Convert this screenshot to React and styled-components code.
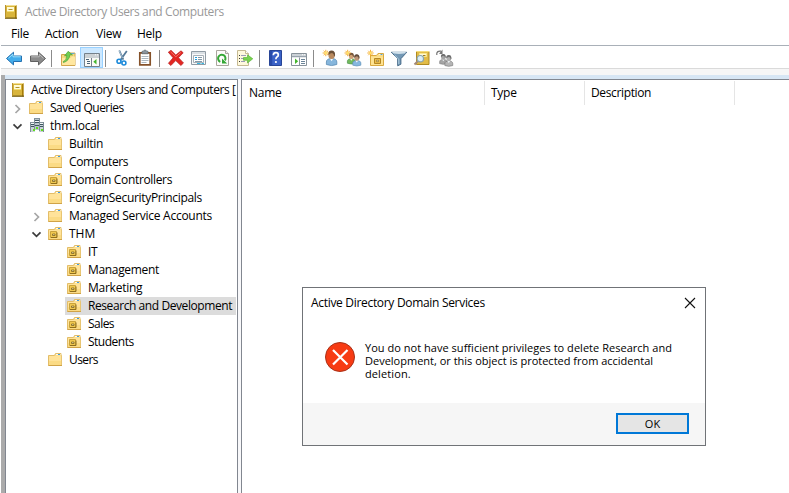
import React from "react";
import styled, { createGlobalStyle, css } from "styled-components";

const Global = createGlobalStyle`
  * { box-sizing: border-box; }
  html, body { margin: 0; padding: 0; background: #fff; overflow: hidden; }
`;

const Window = styled.div`
  position: relative;
  width: 789px;
  height: 493px;
  display: flex;
  flex-direction: column;
  overflow: hidden;
  background: #fff;
  color: #000;
  font-family: "Open Sans", "Noto Sans", sans-serif;
  font-size: 12px;
  line-height: 18px;
  white-space: nowrap;
  cursor: default;
`;

const Text = styled.span`
  flex: none;
  letter-spacing: ${(p) => p.$track ?? -0.25}px;
`;

const TitleBar = styled.header`
  height: 24px;
  flex: none;
  display: flex;
  align-items: center;
  gap: 7px;
  padding: 0 0 1px 4px;
  color: #999;
`;

const MenuBar = styled.nav`
  height: 21px;
  flex: none;
  display: flex;
  padding: 1px 0 0 11px;
`;

const MenuItem = styled.div`
  width: ${(p) => p.$width}px;
`;

const Toolbar = styled.div`
  height: 24px;
  flex: none;
  display: flex;
  margin-left: 1px;
  padding: 1px 0 0 2px;
  border-top: 1px solid #a9b0b8;
  border-bottom: 1px solid #dadada;
`;

const ToolButton = styled.div`
  width: 23px;
  height: 21px;
  flex: none;
  ${(p) =>
    p.$active &&
    css`
      background: #cce8ff;
      box-shadow: inset 0 0 0 1px #99d1ff;
    `}
  svg { display: block; }
`;

const Separator = styled.div`
  width: 1px;
  height: 17px;
  flex: none;
  margin: 3px 5px 0 2px;
  background: #8b8b8b;
`;

const Band = styled.div`
  height: 6px;
  flex: none;
  margin-left: 1px;
  background: #f6f6f6;
`;

const Workspace = styled.main`
  flex: 1;
  min-height: 0;
  display: flex;
  margin-left: 1px;
  border-left: 4px solid #ababab;
  padding-top: 4px;
  background: linear-gradient(#d7e6f4 0 4px, #f8f8fa 4px);
`;

const TreePane = styled.aside`
  width: 233px;
  flex: none;
  padding-top: 1px;
  overflow: hidden;
  background: #fff;
  border: 1px solid #828790;
  border-bottom: 0;
`;

const ListPane = styled.section`
  flex: 1;
  margin-left: 3px;
  background: #fff;
  border: 1px solid #828790;
  border-width: 1px 0 0 1px;
`;

const Row = styled.div`
  height: 18px;
  display: flex;
  align-items: center;
  padding-left: ${(p) => p.$indent}px;
  padding-right: 1px;
  overflow: hidden;
`;

const Expander = styled.div`
  width: 15px;
  flex: none;
  height: 18px;
  svg { display: block; }
`;

const RowBody = styled.div`
  display: flex;
  align-items: center;
  height: 18px;
  gap: ${(p) => p.$gap ?? 6}px;
  padding-left: 2px;
  flex: 1;
  min-width: 0;
  background: ${(p) => (p.$selected ? "#dcdcdc" : "transparent")};
  svg { flex: none; }
`;

const HeaderRow = styled.div`
  display: flex;
  padding-top: 1px;
  height: 26px;
`;

const HeaderCell = styled.div`
  width: ${(p) => p.$width}px;
  height: 24px;
  padding: 3px 0 0 ${(p) => p.$pad ?? 6}px;
  border-right: 1px solid #e5e5e5;
`;

const Dialog = styled.div`
  position: absolute;
  left: 302px;
  top: 287px;
  width: 404px;
  height: 159px;
  display: flex;
  flex-direction: column;
  background: #fff;
  border: 1px solid #707377;
`;

const DialogTitle = styled.div`
  height: 30px;
  flex: none;
  display: flex;
  justify-content: space-between;
  align-items: center;
  padding: 0 9px 0 8px;
`;

const DialogBody = styled.div`
  flex: 1;
  display: flex;
  gap: 9px;
  padding: 23px 0 0 22px;
`;

const Message = styled.p`
  margin: 0;
  font-size: 11px;
  line-height: 13px;
`;

const Line = styled.span`
  display: block;
  letter-spacing: ${(p) => p.$track}px;
`;

const DialogFooter = styled.div`
  height: 42px;
  flex: none;
  display: flex;
  justify-content: flex-end;
  padding: 10px 16px 0 0;
  background: #f6f6f6;
`;

const OkButton = styled.button`
  width: 73px;
  height: 21px;
  padding: 0;
  font: inherit;
  font-size: 11px;
  line-height: 17px;
  color: #000;
  background: #e5e5e5;
  border: 2px solid #0078d7;
`;

const BookIcon = () => (
  <svg width="14" height="16" viewBox="0 0 14 16">
    <path d="M1 1h11.5v13.5H1z" fill="#d9b53c" />
    <path d="M11 1h1.5v13.5H11z" fill="#a67c08" />
    <path d="M1 1h11.5v1H1z" fill="#f2de92" />
    <path d="M1 13.5h12v1.3H1z" fill="#77611d" />
    <path d="M1.5 1v13" stroke="#b8922c" />
    <path d="M3 3h7v5H3z" fill="#fffbd6" />
    <path d="M3 7.5h7" stroke="#f2dc72" />
    <path d="M4.5 5.5h4" stroke="#b1932e" />
  </svg>
);

const FolderIcon = ({ unit }) => (
  <svg width="15" height="16" viewBox="0 0 15 16">
    <path d="M.5 3.5h6l1-2h5.5v2h.5v10H.5z" fill="#fbdc86" stroke="#e3bd68" />
    <path d="M1 4h6.2l1-.5h5V13H1z" fill="#ffe39a" />
    <path d="M1 9h12v4H1z" fill="#f9d578" opacity=".6" />
    <path d="M8 2.5h4.5" stroke="#fffbe9" />
    <path d="M10 2.5h2" stroke="#3f9be0" />
    <path d="M.5 13.5H14" stroke="#d0a347" />
    {unit && (
      <>
        <path d="M2.5 5.5h6v6h-6z" fill="#f0c850" stroke="#c9a33c" />
        <path d="M3 11.5h6v-5" fill="none" stroke="#8f6e1c" />
        <path d="M4.5 8h2.5v1.5H4.5z" fill="#fff3bd" stroke="#7d631c" strokeWidth=".8" />
      </>
    )}
  </svg>
);

const DomainIcon = () => (
  <svg width="16" height="16" viewBox="0 1 16 16" shapeRendering="crispEdges">
    <path d="M5 1h6v12H5z" fill="#b9c5cb" />
    <path d="M1 5h5v10H1zM10 5h5v10h-5z" fill="#c9d3d8" />
    <path d="M5 1.5h6M1 5.5h4M11 5.5h4" stroke="#83929b" />
    <path d="M6 3.5h4M6 5.5h4M6 8.5h4M2 7.5h3M2 9.5h3M11 7.5h3M11 9.5h3" stroke="#3e5560" />
    <path d="M6 4.5h4M2 6.5h3M11 6.5h3" stroke="#f3f7f9" />
    <path d="M1.5 5v10M5.5 2v12M10.5 2v12M14.5 5v10" stroke="#7d8d96" />
    <path d="M7 10h2v2H7zM4 12h2v2H4zM12 12h2v2h-2z" fill="#5fe01a" />
  </svg>
);

const Chevron = ({ open }) => (
  <svg width="12" height="18" viewBox="0 0 12 18">
    {open ? (
      <path d="M1.5 7.3l4 4 4-4" fill="none" stroke="#3c3c3c" strokeWidth="1.7" />
    ) : (
      <path d="M3.5 6l4 4-4 4" fill="none" stroke="#a6a6a6" strokeWidth="1.7" />
    )}
  </svg>
);

const Sparkle = ({ x, y }) => (
  <g transform={`translate(${x} ${y})`}>
    <path d="M0-3.2V3.2M-3.2 0H3.2M-2.2-2.2l4.4 4.4M-2.2 2.2l4.4-4.4" stroke="#f5a623" strokeWidth=".9" />
    <circle r="1.3" fill="#ffe36a" />
  </g>
);

const Person = ({ x, y, scale = 1, hair, skin, shirt, edge }) => (
  <g transform={`translate(${x} ${y}) scale(${scale})`}>
    <path d="M-5.2 12.3v-2.5C-5.2 7.6-3.5 6.3 0 6.3S5.2 7.6 5.2 9.8v2.5Q0 14.4-5.2 12.3z" fill={shirt} stroke={edge} strokeWidth=".8" />
    <path d="M-1.7 6.2L0 9l1.7-2.8z" fill="#f6fbff" />
    <ellipse cy="2.8" rx="3.2" ry="3.9" fill={skin} />
    <path d="M-3.4 2.5Q-3.5-1.6 0-1.6T3.5 3L2.5 4.6Q2.6 1.5.5.9-1.5 1-2.4 2.4z" fill={hair} />
  </g>
);

const toolGlyphs = {
  back: (
    <>
      <path d="M3.5 11.5l7-6.3V9h8v5.5h-8v3.4z" fill="#42aceb" stroke="#2571b1" />
      <path d="M5.5 11.2l4.5-4v2.6h7.7" fill="none" stroke="#9ce0fb" />
    </>
  ),
  forward: (
    <>
      <path d="M19.5 11.5l-7-6.3V9h-8v5.5h8v3.4z" fill="#8c8c8c" stroke="#616161" />
      <path d="M5.2 9.8h8V7.3l4.3 4" fill="none" stroke="#bdbdbd" />
    </>
  ),
  up: (
    <>
      <path d="M4.5 7.5h5l1.5-1.5h7v12.5H4.5z" fill="#f6d980" stroke="#d2a64c" />
      <path d="M5 11h8.5l1.5-1.5h3v8.5H5z" fill="#ffe7a0" />
      <path d="M14 6.5h3.5" stroke="#67aad0" />
      <path d="M6 14.8Q9.8 13.5 9.8 8.4L7.5 9l3.7-4.7L15.5 8l-2.6-.2Q12.5 13.5 6.5 15.6z" fill="#6fce52" stroke="#3d9a2c" strokeWidth=".6" />
    </>
  ),
  tree: (
    <>
      <path d="M4.5 6.5h15v13h-15z" fill="#fbfbf8" stroke="#75818a" />
      <path d="M5 8h14M5 10h14" stroke="#9ba7b0" strokeWidth="1.2" />
      <path d="M15 7.8h1M17 7.8h1" stroke="#fff" />
      <path d="M11.5 11v8" stroke="#75818a" />
      <path d="M6 12.5h3M7 14.5h3M7 16.5h3" stroke="#4b6478" />
      <path d="M16.5 12v5.5L13.3 14.8z" fill="#43b52c" />
    </>
  ),
  cut: (
    <>
      <path d="M8.3 3.5l4 9.2M15.8 4L9.5 13" fill="none" stroke="#557a99" strokeWidth="1.8" />
      <path d="M8.3 4l3.2 7" fill="none" stroke="#bdd0de" strokeWidth=".8" />
      <circle cx="8" cy="14.3" r="2" fill="#fff" stroke="#1c8ada" strokeWidth="1.6" />
      <circle cx="12.9" cy="16" r="2" fill="#fff" stroke="#1c8ada" strokeWidth="1.6" />
    </>
  ),
  paste: (
    <>
      <path d="M5.8 5.8h10.4v12H5.8z" fill="#fff" stroke="#855129" strokeWidth="1.7" />
      <path d="M8 5.5V4.2h1.5l.5-1h2l.5 1H14v2.6H8z" fill="#8a949c" stroke="#56616a" strokeWidth=".6" />
      <path d="M7.5 9.5h7M7.5 11.5h7M7.5 13.5h7M7.5 15.5h5" stroke="#abb7c0" />
    </>
  ),
  remove: (
    <>
      <path d="M3.3 5.2L6 3.3l4.8 4.7L16 3.8l2.2 2-4.7 4.9 5 5.3-2.6 2.5-5.2-4.9-4.8 4.9-2.5-2.2 4.7-5.5z" fill="#e32622" stroke="#b62222" strokeWidth=".7" />
      <path d="M5.5 4.8l5.3 5 5-4.3" fill="none" stroke="#f4766a" />
    </>
  ),
  properties: (
    <>
      <path d="M3.5 4.5h14v13h-14z" fill="#f8f9fa" stroke="#909ba4" />
      <path d="M4 6h13" stroke="#bdc6ce" />
      <path d="M5.5 8.5h10v7h-10z" fill="#fff" stroke="#a8b1b8" />
      <path d="M10 10.5h4M10 12.5h4M7 14.5h7" stroke="#8499a7" />
      <path d="M7 10.5h2M7 12.5h2" stroke="#219bdc" />
      <path d="M9 16.5h3.5M13.5 16.5h2.5" stroke="#37b9e4" />
    </>
  ),
  refresh: (
    <>
      <path d="M5.5 3.5h9l3 3v12h-12z" fill="#fdfcfa" stroke="#aaa69e" />
      <path d="M14.5 3.5v3h3" fill="#eee" stroke="#aaa69e" />
      <path d="M9.3 14.8a3.7 3.7 0 1 1 4.6-1.4" fill="none" stroke="#34a735" strokeWidth="2" />
      <path d="M11 11.5v5h5.2z" fill="#34a735" />
    </>
  ),
  exportList: (
    <>
      <path d="M3.5 3.5h8l3 3v12h-11z" fill="#fff9dd" stroke="#c6ba93" />
      <path d="M11.5 3.5v3h3" fill="#fff" stroke="#c6ba93" />
      <path d="M5 8.5h1M5 11.5h1M5 14.5h1" stroke="#333" />
      <path d="M7 8.5h5M7 11.5h4M7 14.5h4" stroke="#9c9db7" />
      <path d="M9.5 10.5h4V7.8l5.3 4-5.3 4.2v-2.7h-4z" fill="#79d34e" stroke="#51ad32" strokeWidth=".6" />
    </>
  ),
  help: (
    <>
      <path d="M4.5 3.5h12v15h-12z" fill="#3a62c7" stroke="#284596" />
      <path d="M5 4h2.2v14H5z" fill="#284baa" />
      <path d="M8.3 8.2q.1-2.6 2.6-2.6 2.4 0 2.4 2.3 0 1.4-1.4 2.2-1 .6-1 2.2" fill="none" stroke="#fff" strokeWidth="1.7" />
      <circle cx="10.9" cy="15" r="1.1" fill="#fff" />
    </>
  ),
  action: (
    <>
      <path d="M3.5 6.5h15v12h-15z" fill="#fff" stroke="#88929a" />
      <path d="M4 8h14M4 9.7h14" stroke="#98a3ad" strokeWidth="1.2" />
      <path d="M14 7.7h1M16 7.7h1" stroke="#fff" />
      <path d="M11.5 10.5v8" stroke="#88929a" />
      <path d="M7 11.5v5.5l3.2-2.7z" fill="#43b52c" />
      <path d="M13 12.5h4M13 14.5h4M13 16.5h4" stroke="#6b8498" />
    </>
  ),
  user: (
    <>
      <Person x={12.6} y={5.2} hair="#6b5038" skin="#b98a5f" shirt="#86b6dc" edge="#5b8cb4" />
      <Sparkle x={6.8} y={6} />
    </>
  ),
  group: (
    <>
      <Person x={9.3} y={7} scale={0.75} hair="#74543a" skin="#d0a276" shirt="#72b95c" edge="#3c8940" />
      <Person x={14.8} y={8.6} scale={0.78} hair="#5f4a3b" skin="#be9676" shirt="#86b7df" edge="#5b8cb4" />
      <Sparkle x={5.7} y={6} />
    </>
  ),
  unit: (
    <>
      <path d="M5.5 8.5h6l1.5-2h5.5v12h-13z" fill="#fbdc86" stroke="#d9a940" />
      <path d="M6 10h12v8H6z" fill="#ffe391" />
      <path d="M14 7.5h4" stroke="#fff6d8" />
      <path d="M15.5 7.5h2" stroke="#58a5d1" />
      <path d="M9.5 11.5h6v5h-6z" fill="#edbd47" stroke="#b48724" />
      <path d="M11.5 13.2h2v1.5h-2z" fill="#fff1b8" stroke="#80652d" strokeWidth=".6" />
      <Sparkle x={5.5} y={6} />
    </>
  ),
  filter: (
    <>
      <path d="M3.3 5.3h15.4l-5.8 6.4v5.5l-3.2 1.6v-7.1z" fill="#7398b5" stroke="#476b89" />
      <ellipse cx="11" cy="5.7" rx="7" ry="1.2" fill="#d0e0eb" />
      <path d="M6.5 8l4.3 4.2v5" fill="none" stroke="#b4d0e2" />
    </>
  ),
  find: (
    <>
      <path d="M5.5 4.5h12.5v13H5.5z" fill="#e2bc47" stroke="#b08a23" />
      <path d="M5 4.5h13" stroke="#f4dc7a" />
      <path d="M8.5 6.5h7v3h-7z" fill="#fff9d6" stroke="#fbe789" />
      <path d="M12 8.5h2.5" stroke="#967b24" />
      <path d="M7 14l-3.5 3.5" stroke="#a28a79" strokeWidth="2" />
      <circle cx="9.3" cy="11.7" r="3.2" fill="#d9edf6" stroke="#8ba4ad" strokeWidth="1.2" />
    </>
  ),
  move: (
    <>
      <Person x={9.3} y={8} scale={0.7} hair="#6a6a6a" skin="#a5a5a5" shirt="#a5a5a5" edge="#707070" />
      <Person x={14.8} y={9.2} scale={0.76} hair="#6f6f6f" skin="#b0b0b0" shirt="#b5b5b5" edge="#707070" />
      <path d="M2.8 8V6.2Q3.3 4.2 6 4.2h1" fill="none" stroke="#777" strokeWidth="1.2" />
      <path d="M8.5 2.5v4.8L5 6.8z" fill="#777" />
    </>
  ),
};

const toolGroups = [
  ["back", "forward"],
  ["up", "tree"],
  ["cut", "paste"],
  ["remove", "properties", "refresh", "exportList"],
  ["help", "action"],
  ["user", "group", "unit", "filter", "find", "move"],
];

const menus = [
  ["File", 34],
  ["Action", 51],
  ["View", 41],
  ["Help", 30],
];

const tree = [
  { label: "Saved Queries", level: 0, arrow: "closed", track: -0.5 },
  { label: "thm.local", level: 0, arrow: "open", icon: "domain" },
  { label: "Builtin", level: 1 },
  { label: "Computers", level: 1, track: -0.33 },
  { label: "Domain Controllers", level: 1, icon: "unit", track: -0.34 },
  { label: "ForeignSecurityPrincipals", level: 1, track: -0.31 },
  { label: "Managed Service Accounts", level: 1, arrow: "closed" },
  { label: "THM", level: 1, arrow: "open", icon: "unit", track: 0 },
  { label: "IT", level: 2, icon: "unit" },
  { label: "Management", level: 2, icon: "unit", track: -0.33 },
  { label: "Marketing", level: 2, icon: "unit" },
  { label: "Research and Development", level: 2, icon: "unit", selected: true, track: -0.42 },
  { label: "Sales", level: 2, icon: "unit", track: -0.55 },
  { label: "Students", level: 2, icon: "unit", track: -0.5 },
  { label: "Users", level: 1, track: -0.6 },
];

const TreeRow = ({ item }) => (
  <Row $indent={6 + item.level * 19}>
    <Expander>{item.arrow && <Chevron open={item.arrow === "open"} />}</Expander>
    <RowBody $selected={item.selected} $gap={item.icon === "domain" ? 5 : 6}>
      {item.icon === "domain" ? <DomainIcon /> : <FolderIcon unit={item.icon === "unit"} />}
      <Text $track={item.track}>{item.label}</Text>
    </RowBody>
  </Row>
);

export default function App() {
  return (
    <>
      <Global />
      <Window>
        <TitleBar>
          <BookIcon />
          <Text $track={-0.39}>Active Directory Users and Computers</Text>
        </TitleBar>
        <MenuBar>
          {menus.map(([label, width]) => (
            <MenuItem key={label} $width={width}>
              <Text>{label}</Text>
            </MenuItem>
          ))}
        </MenuBar>
        <Toolbar>
          {toolGroups.map((group, i) => (
            <React.Fragment key={group[0]}>
              {i > 0 && <Separator />}
              {group.map((name) => (
                <ToolButton key={name} $active={name === "tree"}>
                  <svg width="23" height="22" viewBox="0 0 23 22">{toolGlyphs[name]}</svg>
                </ToolButton>
              ))}
            </React.Fragment>
          ))}
        </Toolbar>
        <Band />
        <Workspace>
          <TreePane>
            <Row $indent={3}>
              <RowBody>
                <BookIcon />
                <Text $track={-0.4}>Active Directory Users and Computers [</Text>
              </RowBody>
            </Row>
            {tree.map((item) => (
              <TreeRow key={item.label} item={item} />
            ))}
          </TreePane>
          <ListPane>
            <HeaderRow>
              <HeaderCell $width={243} $pad={7}><Text>Name</Text></HeaderCell>
              <HeaderCell $width={100}><Text>Type</Text></HeaderCell>
              <HeaderCell $width={150}><Text $track={-0.36}>Description</Text></HeaderCell>
            </HeaderRow>
          </ListPane>
        </Workspace>
        <Dialog>
          <DialogTitle>
            <Text $track={-0.31}>Active Directory Domain Services</Text>
            <svg width="12" height="12" viewBox="0 0 12 12">
              <path d="M1 1l10 10M11 1L1 11" stroke="#111" strokeWidth="1.1" />
            </svg>
          </DialogTitle>
          <DialogBody>
            <svg width="31" height="31" viewBox="0 0 31 31">
              <circle cx="15" cy="16" r="14.5" fill="#f73b13" stroke="#a93118" />
              <path d="M8 9l14.5 14.5M22.5 9L8 23.5" stroke="#fff" strokeWidth="2.2" />
            </svg>
            <Message>
              <Line $track={0.03}>You do not have sufficient privileges to delete Research and</Line>
              <Line $track={0}>Development, or this object is protected from accidental</Line>
              <Line $track={0.1}>deletion.</Line>
            </Message>
          </DialogBody>
          <DialogFooter>
            <OkButton>OK</OkButton>
          </DialogFooter>
        </Dialog>
      </Window>
    </>
  );
}
